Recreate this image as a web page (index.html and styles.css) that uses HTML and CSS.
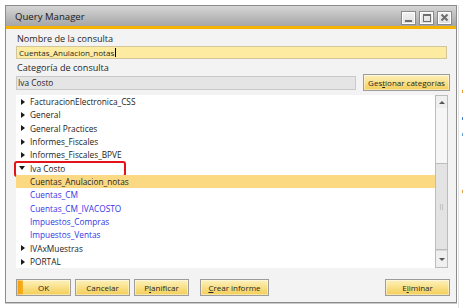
FILE: index.html
```html
<!DOCTYPE html>
<html>
<head>
<meta charset="utf-8">
<title>Query Manager</title>
<link rel="stylesheet" href="styles.css">
</head>
<body>
<div class="screen">
  <div class="dialog">
    <div class="titlebar">
      <span class="title">Query Manager</span>
      <div class="wbtns">
        <span class="wbtn"><svg width="13" height="12" viewBox="0 0 13 12"><rect x="3" y="8" width="7" height="2" fill="#6e6e6e"/></svg></span>
        <span class="wbtn"><svg width="13" height="12" viewBox="0 0 13 12"><rect x="3.5" y="2.5" width="7" height="7" fill="none" stroke="#6e6e6e" stroke-width="1"/><rect x="3" y="2" width="8" height="2" fill="#6e6e6e"/></svg></span>
        <span class="wbtn"><svg width="13" height="12" viewBox="0 0 13 12"><path d="M3.5 2.5 L9.5 8.5 M9.5 2.5 L3.5 8.5" stroke="#6e6e6e" stroke-width="2" fill="none"/></svg></span>
      </div>
    </div>
    <div class="content">
      <div class="lbl">Nombre de la consulta</div>
      <div class="field name">Cuentas_Anulacion_notas<span class="caret"></span></div>
      <div class="lbl lbl2">Categoría de consulta</div>
      <div class="catrow">
        <div class="field cat">Iva Costo</div>
        <button class="btn gest">Ges<u>t</u>ionar categorías</button>
      </div>
      <div class="treebox">
        <ul class="tree">
          <li class="row"><span class="tri"><span class="arrow-right"></span></span>FacturacionElectronica_CSS</li>
          <li class="row"><span class="tri"><span class="arrow-right"></span></span>General</li>
          <li class="row"><span class="tri"><span class="arrow-right"></span></span>General Practices</li>
          <li class="row"><span class="tri"><span class="arrow-right"></span></span>Informes_Fiscales</li>
          <li class="row"><span class="tri"><span class="arrow-right"></span></span>Informes_Fiscales_BPVE</li>
          <li class="row marked"><span class="tri"><span class="arrow-down"></span></span>Iva Costo<span class="mark"></span></li>
          <li class="row child selected"><span class="tri"></span>Cuentas_Anulacion_notas</li>
          <li class="row child"><span class="tri"></span>Cuentas_CM</li>
          <li class="row child"><span class="tri"></span>Cuentas_CM_IVACOSTO</li>
          <li class="row child"><span class="tri"></span>Impuestos_Compras</li>
          <li class="row child"><span class="tri"></span>Impuestos_Ventas</li>
          <li class="row"><span class="tri"><span class="arrow-right"></span></span>IVAxMuestras</li>
          <li class="row"><span class="tri"><span class="arrow-right"></span></span>PORTAL</li>
        </ul>
        <div class="vscroll">
          <div class="sbtn up"><span class="sarrow-up"></span></div>
          <div class="track"></div>
          <div class="thumb"><span class="grip"></span></div>
          <div class="sbtn down"><span class="sarrow-down"></span></div>
        </div>
      </div>
      <div class="actions">
        <button class="btn act ok">OK</button>
        <button class="btn act">Cancelar</button>
        <button class="btn act">P<u>l</u>anificar</button>
        <button class="btn act wide"><u>C</u>rear informe</button>
        <span class="spacer"></span>
        <button class="btn act del">E<u>l</u>iminar</button>
      </div>
    </div>
  </div>
  <div class="side">
    <span class="dot d1"></span>
    <span class="dot d2"></span>
    <span class="dot d3"></span>
    <span class="dot d4"></span>
  </div>
</div>
</body>
</html>
```
FILE: styles.css
```css
* { box-sizing: border-box; }
html, body { margin: 0; padding: 0; }
body {
  background: #ffffff;
  font-family: "Open Sans", "Noto Sans", sans-serif;
  width: 463px;
  height: 308px;
  overflow: hidden;
}
.screen {
  display: flex;
  padding: 5px 0 0 5px;
  height: 308px;
}
.dialog {
  width: 452px;
  height: 298px;
  border: 1px solid #8c8c8c;
  background: #f3f3f3;
  display: flex;
  flex-direction: column;
  box-shadow: 0 1px 0 #c8c8c8;
}
.titlebar {
  height: 23px;
  flex: none;
  background: linear-gradient(#d6d6d6, #bbbbbb 55%, #a6a6a6);
  border-bottom: 3px solid #f5b300;
  display: flex;
  align-items: center;
  padding: 0 4px 0 9px;
}
.title {
  font-size: 9.6px;
  color: #1a1a1a;
  flex: 1;
  padding-top: 1px;
}
.wbtns {
  display: flex;
  gap: 3px;
  margin-top: 3px;
}
.wbtn {
  width: 15px;
  height: 14px;
  border: 1px solid #8a8a8a;
  background: linear-gradient(#f4f4f4, #dedede);
  box-shadow: inset 0 0 0 1px #ffffff;
  display: flex;
  align-items: center;
  justify-content: center;
}
.wbtn svg { display: block; }
.content {
  flex: 1;
  display: flex;
  flex-direction: column;
  padding: 4px 6px 0 10px;
  font-size: 8px;
  color: #262626;
}
.lbl {
  height: 12px;
  line-height: 12px;
  padding-left: 1px;
  font-size: 9.1px;
}
.lbl2 { margin-top: 4px; height: 11px; line-height: 10px; }
.field {
  height: 13px;
  line-height: 11px;
  border: 1px solid #c6c6c6;
  padding-left: 2px;
  white-space: nowrap;
}
.name {
  margin-top: 1px;
  margin-right: 3px;
  background: #fdeba1;
  border-color: #d2c79a;
}
.caret {
  display: inline-block;
  width: 1px;
  height: 9px;
  background: #000;
  vertical-align: -1px;
  margin-left: 1px;
}
.catrow {
  display: flex;
  align-items: center;
  gap: 7px;
  height: 17px;
}
.cat {
  flex: 1;
  height: 14px;
  line-height: 12px;
  background: #e5e5e5;
  border-color: #c9c9c9;
  padding-left: 1px;
  font-size: 8.3px;
}
.btn {
  font-family: "Open Sans", "Noto Sans", sans-serif;
  font-size: 8px;
  color: #262626;
  height: 17px;
  padding: 0;
  border: 1px solid #9c9c9c;
  background: linear-gradient(#fdf1bd, #f9e087 50%, #f3cd57);
  box-shadow: inset 0 0 0 1px rgba(255,255,255,0.45);
  line-height: 14px;
  text-align: center;
  white-space: nowrap;
}
.btn u { text-decoration: underline; text-underline-offset: 1px; }
.gest { width: 87px; }
.treebox {
  margin-top: 4px;
  margin-right: 2px;
  height: 173px;
  display: flex;
  background: #ffffff;
}
.tree {
  list-style: none;
  margin: 0;
  padding: 0;
  flex: 1;
  font-size: 8.3px;
}
.row {
  position: relative;
  height: 13.33px;
  line-height: 13.33px;
  display: flex;
  align-items: center;
  white-space: nowrap;
  color: #222222;
}
.row.child { color: #3434e6; }
.row.selected { background: #fbd982; color: #262626; }
.tri {
  width: 14px;
  flex: none;
  display: flex;
  align-items: center;
  padding-left: 5px;
  height: 100%;
}
.arrow-right {
  width: 0; height: 0;
  border-top: 3.5px solid transparent;
  border-bottom: 3.5px solid transparent;
  border-left: 4px solid #1a1a1a;
}
.arrow-down {
  margin-left: -2px;
  width: 0; height: 0;
  border-left: 3.5px solid transparent;
  border-right: 3.5px solid transparent;
  border-top: 4px solid #1a1a1a;
}
.mark {
  position: absolute;
  left: -2px;
  top: -1px;
  width: 112px;
  height: 16px;
  border: 2px solid #e3121b;
  border-radius: 3px;
}
.vscroll {
  width: 13px;
  flex: none;
  display: flex;
  flex-direction: column;
  border: 1px solid #bcbcbc;
  background: #f4f4f4;
}
.sbtn {
  display: flex;
  align-items: center;
  justify-content: center;
  background: #efefef;
}
.sbtn.up { height: 12px; }
.sbtn.down { height: 17px; border-top: 1px solid #d8d8d8; }
.sarrow-up {
  width: 0; height: 0;
  border-left: 3px solid transparent;
  border-right: 3px solid transparent;
  border-bottom: 3px solid #555;
}
.sarrow-down {
  width: 0; height: 0;
  border-left: 3px solid transparent;
  border-right: 3px solid transparent;
  border-top: 3px solid #555;
}
.track { height: 55px; background: #f6f6f6; }
.thumb {
  height: 87px;
  background: #e3e3e3;
  border: 1px solid #bcbcbc;
  margin: 0 -1px;
  display: flex;
  align-items: center;
  justify-content: center;
}
.grip {
  width: 5px;
  height: 6px;
  background-image: radial-gradient(circle, #b8b8b8 0.7px, transparent 0.8px);
  background-size: 2.5px 2px;
}
.actions {
  margin-top: 11px;
  display: flex;
  gap: 4px;
  height: 17px;
}
.act { width: 55px; }
.act.wide { width: 69px; margin-left: 7px; }
.act.ok {
  background: linear-gradient(90deg, #f29c00 0, #f6b22a 6px, transparent 6px),
              linear-gradient(#fdf1bd, #f9e087 50%, #f3cd57);
}
.act.del { width: 65px; }
.spacer { flex: 1; }
.side {
  flex: 1;
  position: relative;
  border-left: 1px solid #e2e2e2;
  margin-left: 1px;
}
.dot { position: absolute; width: 3px; height: 3px; left: 3px; }
.d1 { top: 85px; background: #e89a2a; }
.d2 { top: 112px; background: #4a7fc8; }
.d3 { top: 128px; background: #6aa0d8; }
.d4 { top: 185px; background: #e8a040; }
```
